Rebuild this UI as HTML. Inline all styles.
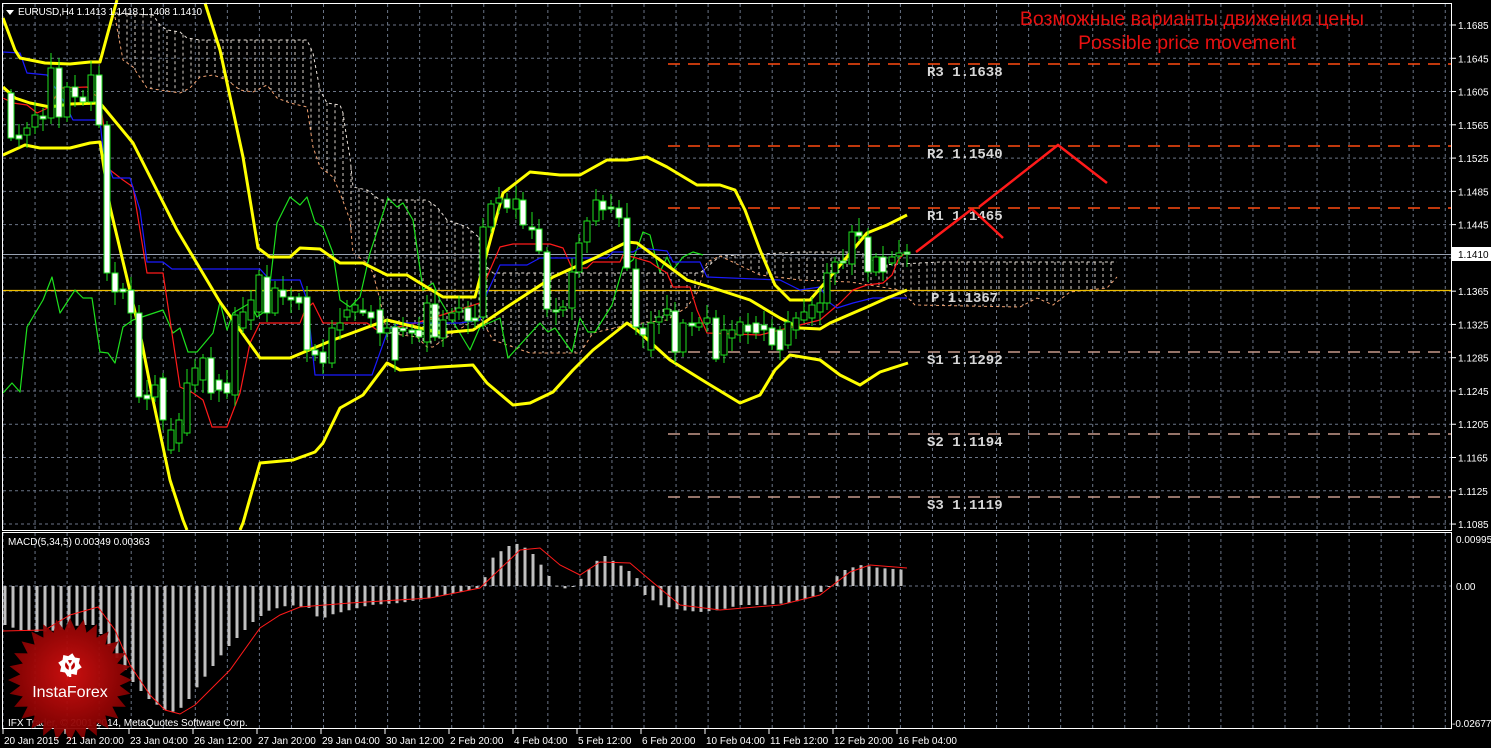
<!DOCTYPE html>
<html><head><meta charset="utf-8"><style>
html,body{margin:0;padding:0;background:#000;width:1491px;height:748px;overflow:hidden}
svg{display:block}
text{font-family:"Liberation Sans",sans-serif}
text.mono{font-family:"Liberation Mono",monospace}
</style></head><body>
<svg id="s" width="1491" height="748" viewBox="0 0 1491 748" xmlns="http://www.w3.org/2000/svg">
<rect width="1491" height="748" fill="#000"/>
<g id="grid" stroke="#6b7587" stroke-width="1" stroke-dasharray="3,3"></g>
<g id="cloud"></g>
<g id="pivots"></g>
<g id="ind"></g>
<g id="candles"></g>
<g id="macd"></g>
<rect x="2.5" y="3.5" width="1449" height="527" fill="none" stroke="#fff" stroke-width="1"/>
<rect x="2.5" y="532.5" width="1449" height="196" fill="none" stroke="#fff" stroke-width="1"/>
<path d="M6 10 L14 10 L10 15 Z" fill="#fff"/>
<text x="18" y="15" font-size="10" fill="#fff" letter-spacing="-0.2">EURUSD,H4  1.1413 1.1418 1.1408 1.1410</text>
<text x="1192" y="25" font-size="19.5" fill="#e81010" text-anchor="middle">Возможные варианты движения цены</text>
<text x="1187" y="49" font-size="19.5" fill="#e81010" text-anchor="middle">Possible price movement</text>
<polyline points="916,252 972,209 1003,238" fill="none" stroke="#ff1a1a" stroke-width="2.5"/>
<polyline points="979,207 1058,145 1107,183" fill="none" stroke="#ff1a1a" stroke-width="2.5"/>
<text x="8" y="545" font-size="10" fill="#fff">MACD(5,34,5) 0.00349 0.00363</text>
<text x="8" y="726" font-size="10" fill="#fff">IFX Trader, © 2001-2014, MetaQuotes Software Corp.</text>
<g id="logo"></g>
<g id="axis"></g>
</svg>
<script>
var NS="http://www.w3.org/2000/svg";
function el(p,t,a,txt){var e=document.createElementNS(NS,t);for(var k in a)e.setAttribute(k,a[k]);if(txt!=null)e.textContent=txt;document.getElementById(p).appendChild(e);return e;}
for(var x=3;x<1451;x+=32.05){el('grid','line',{x1:x,y1:4,x2:x,y2:530});el('grid','line',{x1:x,y1:533,x2:x,y2:728});}
var plabels=["1.1685","1.1645","1.1605","1.1565","1.1525","1.1485","1.1445","1.1405","1.1365","1.1325","1.1285","1.1245","1.1205","1.1165","1.1125","1.1085"];
for(var k=0;k<16;k++){var y=25+33.27*k;el('grid','line',{x1:3,y1:y,x2:1451,y2:y});
 if(k!=7){el('axis','text',{x:1458,y:y+4,'font-size':10,fill:'#fff'},plabels[k]);el('axis','line',{x1:1452,y1:y,x2:1456,y2:y,stroke:'#fff'});}}
el('grid','line',{x1:3,y1:586,x2:1451,y2:586});
el('axis','text',{x:1456,y:543,'font-size':10,fill:'#fff'},"0.00995");
el('axis','text',{x:1456,y:590,'font-size':10,fill:'#fff'},"0.00");
el('axis','text',{x:1452,y:727,'font-size':10,fill:'#fff'},"-0.02677");
el('axis','rect',{x:1452,y:247,width:39,height:14,fill:'#fff'});
el('axis','text',{x:1458,y:258,'font-size':10,fill:'#000'},"1.1410");
var tl=[["20 Jan 2015",4],["21 Jan 20:00",66],["23 Jan 04:00",130],["26 Jan 12:00",194],["27 Jan 20:00",258],["29 Jan 04:00",322],["30 Jan 12:00",386],["2 Feb 20:00",450],["4 Feb 04:00",514],["5 Feb 12:00",578],["6 Feb 20:00",642],["10 Feb 04:00",706],["11 Feb 12:00",770],["12 Feb 20:00",834],["16 Feb 04:00",898]];
tl.forEach(function(t){el('axis','text',{x:t[1],y:744,'font-size':10,fill:'#fff'},t[0]);el('axis','line',{x1:t[1]-1,y1:729,x2:t[1]-1,y2:734,stroke:'#fff'});});
el('pivots','line',{x1:3,y1:254.5,x2:1451,y2:254.5,stroke:'#9aa3b3','stroke-width':1});
el('pivots','line',{x1:3,y1:290.5,x2:1451,y2:290.5,stroke:'#f0c000','stroke-width':1.2});
var pv=[["R3 1.1638",64,'#ff4a10'],["R2 1.1540",146,'#ff4a10'],["R1 1.1465",208,'#ff4a10'],["P 1.1367",290,null],["S1 1.1292",352,'#c89a8c'],["S2 1.1194",434,'#c89a8c'],["S3 1.1119",497,'#c89a8c']];
pv.forEach(function(p){if(p[2])el('pivots','line',{x1:668,y1:p[1],x2:1451,y2:p[1],stroke:p[2],'stroke-width':1.5,'stroke-dasharray':'12,8'});
 el('pivots','text',{x:(p[0][0]=='P'?931:927),y:p[1]+12,'font-size':14,'font-weight':'bold',fill:'#d8d8d8','class':'mono'},p[0]);});
function interp(pts,x){for(var i=0;i<pts.length-1;i++){if(x>=pts[i][0]&&x<=pts[i+1][0]){var t=(x-pts[i][0])/(pts[i+1][0]-pts[i][0]||1);return pts[i][1]+t*(pts[i+1][1]-pts[i][1]);}}return null;}
var ctop=[[115,13],[153,15],[160,25],[167,30],[180,32],[187,38],[200,40],[307,40],[313,53],[320,90],[327,103],[340,105],[343,113],[347,140],[350,157],[353,187],[367,190],[380,200],[427,200],[437,207],[447,220],[467,227],[482,240],[487,267],[493,273],[700,273],[720,256],[800,252],[860,252],[880,265],[940,262],[1117,262]];
var cbot=[[115,17],[123,60],[133,67],[147,88],[160,90],[180,93],[190,88],[200,77],[213,75],[227,80],[240,90],[253,92],[267,85],[277,98],[290,103],[307,107],[313,147],[320,167],[333,177],[340,193],[350,220],[353,253],[367,263],[373,273],[380,300],[387,333],[417,337],[427,347],[433,347],[453,333],[480,317],[493,340],[530,353],[580,353],[593,333],[627,325],[667,320],[687,307],[697,293],[707,262],[720,256],[760,275],[800,280],[850,282],[900,290],[915,305],[1020,307],[1037,298],[1053,305],[1070,292],[1107,288],[1117,277]];
function pl(pts){return pts.map(function(p){return p[0]+','+p[1]}).join(' ');}
for(var x=119;x<1117;x+=8){var a=interp(ctop,x),b=interp(cbot,x);if(a!=null&&b!=null&&Math.abs(a-b)>3)el('cloud','line',{x1:x,y1:a,x2:x,y2:b,stroke:'#d8d0c8','stroke-width':1,'stroke-dasharray':'3,3'});}
el('cloud','polyline',{points:pl(ctop),fill:'none',stroke:'#e8e0d8','stroke-dasharray':'3,3'});
el('cloud','polyline',{points:pl(cbot),fill:'none',stroke:'#f0a070','stroke-dasharray':'3,3'});
function line(pts,c,w){el('ind','polyline',{points:pl(pts),fill:'none',stroke:c,'stroke-width':w,'stroke-linejoin':'round'});}
line([[3,393],[12,383],[20,392],[27,327],[43,300],[52,277],[60,313],[75,290],[83,298],[92,298],[100,352],[108,353],[115,363],[123,327],[133,320],[163,310],[173,333],[180,328],[188,352],[197,352],[213,333],[220,302],[227,330],[233,313],[250,303],[257,317],[267,310],[277,223],[290,197],[300,205],[307,197],[315,222],[323,227],[333,253],[340,300],[350,307],[360,297],[370,253],[388,198],[397,207],[403,203],[413,220],[423,290],[433,283],[440,300],[470,350],[480,327],[500,318],[508,358],[540,323],[548,332],[555,328],[572,352],[580,318],[588,332],[595,332],[612,305],[623,267],[633,260],[643,232],[650,235],[657,263],[660,272],[667,257],[673,270],[683,257],[693,252],[703,255]],'#1ee01e',1.2);
line([[3,98],[13,103],[27,105],[37,113],[50,107],[60,88],[87,87],[100,100],[110,170],[123,180],[133,187],[147,273],[163,273],[180,387],[193,393],[203,400],[212,427],[227,427],[240,393],[250,343],[260,323],[300,323],[305,310],[313,303],[323,323],[367,323],[377,330],[410,325],[480,303],[487,277],[500,247],[513,244],[550,244],[563,248],[572,268],[587,268],[593,262],[620,262],[623,255],[633,257],[650,262],[657,267],[667,273],[673,287],[690,287],[697,310],[707,333],[760,335],[800,325],[820,320],[840,303],[853,290],[867,285],[883,283],[892,275],[898,260],[905,253]],'#ff1a1a',1.2);
line([[3,52],[20,53],[27,73],[47,75],[63,100],[73,120],[100,120],[103,150],[113,178],[130,178],[140,210],[147,262],[163,262],[172,269],[260,269],[270,280],[300,280],[307,300],[315,375],[372,375],[388,330],[400,323],[460,323],[480,320],[487,293],[500,265],[527,265],[540,258],[607,258],[613,252],[633,252],[640,248],[667,251],[673,262],[700,262],[707,277],[780,280],[800,290],[820,287],[830,303],[837,308],[853,303],[873,298],[907,298]],'#1a1aff',1.2);
var Y='#ffff00';
line([[3,18],[15,50],[20,58],[45,63],[70,64],[90,62],[100,62],[110,25],[117,0]],Y,3);
line([[3,87],[15,98],[30,103],[50,107],[70,104],[100,103],[133,143],[177,230],[220,302],[260,358],[290,358],[333,340],[387,320],[440,333],[473,330],[507,307],[553,277],[597,257],[627,242],[637,243],[660,260],[687,280],[710,287],[750,300],[780,318],[800,328],[820,329],[830,323],[867,307],[887,298],[907,290]],Y,3);
line([[3,155],[25,145],[40,148],[70,148],[90,143],[100,142],[110,207],[140,333],[153,400],[170,480],[183,520],[187,530]],Y,3);
line([[205,3],[220,50],[243,157],[258,248],[270,257],[290,257],[300,248],[320,249],[340,263],[363,263],[387,275],[407,275],[420,283],[443,297],[475,297],[503,193],[530,172],[560,175],[580,175],[607,160],[627,160],[647,157],[667,167],[697,185],[720,185],[735,190],[745,210],[760,250],[775,285],[790,300],[810,300],[830,277],[847,257],[867,233],[887,225],[907,215]],Y,3);
line([[240,530],[243,523],[260,463],[293,460],[315,452],[323,443],[340,408],[363,395],[387,363],[400,370],[440,367],[473,365],[487,383],[513,405],[530,403],[553,392],[573,370],[593,350],[627,323],[637,330],[670,360],[707,383],[740,403],[760,395],[775,370],[790,355],[820,360],[840,375],[860,385],[880,372],[908,363]],Y,3);
var C=[[11,93,138,1],[19,135,139,1],[27,128,135,0],[35,115,127,0],[43,116,119,1],[51,68,118,0],[59,68,117,1],[67,87,117,0],[75,87,97,1],[83,97,102,1],[91,75,102,0],[99,75,125,1],[107,125,273,1],[115,273,292,1],[123,289,292,1],[131,290,313,1],[139,313,397,1],[147,395,399,1],[155,385,397,0],[163,378,420,1],[171,430,450,0],[179,420,443,0],[187,383,433,0],[195,368,385,0],[203,358,380,0],[211,358,393,1],[219,380,390,1],[227,383,393,1],[235,315,395,0],[243,312,328,0],[251,300,320,0],[259,275,312,0],[267,277,313,1],[275,288,313,0],[283,290,297,1],[291,297,300,1],[299,297,303,1],[307,297,350,1],[315,350,355,1],[323,352,363,1],[332,328,363,0],[340,323,330,0],[347,310,317,0],[355,305,312,0],[363,310,313,1],[371,312,318,1],[380,310,333,1],[387,328,333,0],[395,327,360,1],[403,328,331,1],[412,330,333,1],[419,330,337,1],[427,303,342,0],[435,304,337,1],[443,320,338,0],[452,313,320,0],[459,308,312,0],[468,308,321,1],[475,318,321,1],[483,227,317,0],[491,204,227,0],[499,198,203,0],[507,199,208,1],[516,199,209,0],[523,200,225,1],[532,227,230,1],[539,229,251,1],[547,252,309,1],[556,310,312,1],[563,307,310,0],[572,272,308,0],[579,243,272,0],[587,221,242,0],[596,200,221,0],[603,201,210,1],[611,207,209,1],[619,208,218,1],[627,218,268,1],[636,269,327,1],[643,328,335,1],[651,323,350,0],[659,317,322,0],[667,309,315,0],[675,311,352,1],[683,323,352,0],[692,323,326,1],[699,323,327,0],[707,318,323,0],[716,318,359,1],[724,330,355,0],[732,330,338,0],[740,322,335,0],[748,325,332,1],[756,323,333,1],[764,325,330,1],[772,328,345,1],[780,330,350,1],[788,322,345,0],[796,318,330,0],[804,312,320,0],[812,305,318,0],[820,303,312,0],[827,273,303,0],[835,262,273,0],[843,261,263,1],[852,232,264,0],[859,232,236,1],[868,237,272,1],[876,257,272,0],[883,257,272,1],[892,257,263,0],[899,253,256,0],[907,252,254,1]];
C.forEach(function(c,i){var x=c[0],h=c[2]-c[1];var wt=c[1]-(4+(i*7)%12),wb=c[2]+(3+(i*5)%11);
 el('candles','line',{x1:x,y1:wt,x2:x,y2:wb,stroke:'#1ee01e','stroke-width':1});
 el('candles','rect',{x:x-3,y:c[1],width:6,height:Math.max(h,2),fill:c[3]?'#fff':'#000',stroke:'#1ee01e','stroke-width':1});});
var mb=[[5,625],[20,630],[40,632],[60,630],[80,625],[95,625],[105,640],[115,655],[125,670],[135,685],[150,700],[165,710],[175,712],[185,705],[195,690],[210,670],[225,650],[240,635],[255,620],[270,610],[290,605],[310,608],[320,620],[330,615],[350,610],[370,605],[400,603],[430,598],[460,592],[478,588],[483,584],[490,560],[505,548],[515,543],[530,550],[545,570],[555,585],[570,590],[580,580],[595,562],[605,556],[620,565],[635,575],[642,586],[645,595],[660,605],[680,610],[700,612],[720,610],[740,605],[760,605],[790,603],[810,598],[828,588],[832,580],[845,570],[860,565],[880,568],[907,570]];
for(var x=5;x<=907;x+=8){var v=interp(mb,x);if(v==null)continue;var y0=586;el('macd','rect',{x:x-1.5,y:Math.min(v,y0),width:3,height:Math.max(Math.abs(v-y0),1),fill:'#c0c0c0'});}
el('macd','polyline',{points:pl([[3,631],[45,630],[70,615],[98,607],[115,630],[130,665],[150,695],[165,710],[180,714],[195,705],[210,690],[230,670],[260,628],[280,615],[300,607],[350,603],[430,598],[480,588],[520,550],[540,548],[560,565],[580,575],[600,562],[630,563],[650,580],[680,605],[720,610],[780,605],[820,595],[850,572],[870,565],[907,568]]),fill:'none',stroke:'#ff1a1a','stroke-width':1});
var pts=[],cx=70,cy=680,n=28;for(var i=0;i<n*2;i++){var r=i%2?50:62,a=Math.PI*i/n;pts.push([cx+r*Math.sin(a),cy-r*Math.cos(a)]);}
var g=el('logo','defs',{});
g.innerHTML='<radialGradient id="rg" cx="50%" cy="45%" r="55%"><stop offset="0" stop-color="#d41010"/><stop offset="1" stop-color="#7a0000"/></radialGradient>';
el('logo','polygon',{points:pl(pts),fill:'url(#rg)',opacity:'0.95'});
var gp=[];for(var i=0;i<16;i++){var r=i%2?9:12,a=Math.PI*2*i/16+Math.PI/16;gp.push([70+r*Math.sin(a),665-r*Math.cos(a)]);}
el('logo','polygon',{points:pl(gp),fill:'#fff'});
el('logo','circle',{cx:70,cy:665,r:5,fill:'#b00'});
el('logo','path',{d:'M66 660 L70 666 L74 660 M70 666 L70 677',stroke:'#fff','stroke-width':2.5,fill:'none'});
el('logo','text',{x:70,y:697,'font-size':16,fill:'#fff','text-anchor':'middle'},'InstaForex');
</script>
</body></html>
